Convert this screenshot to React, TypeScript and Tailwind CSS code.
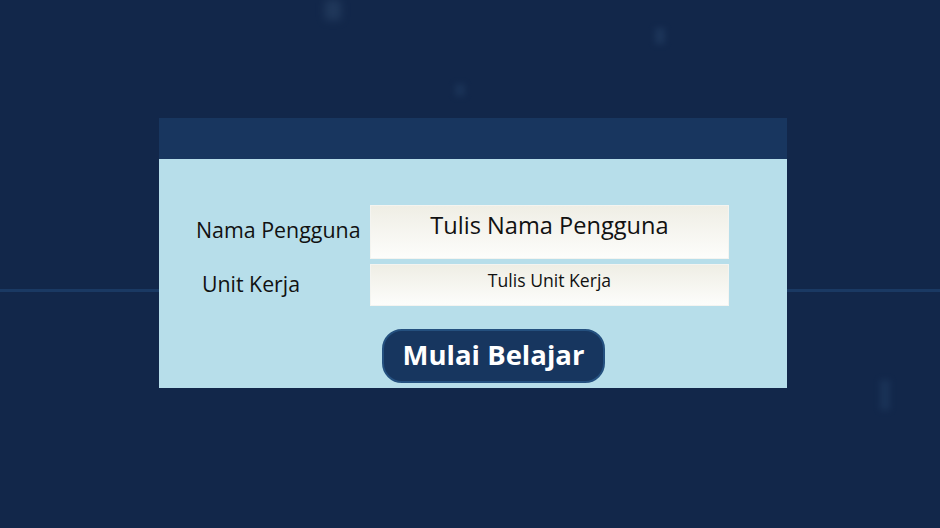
import React from "react";

export default function App() {
  return (
    <div
      className="relative w-[940px] h-[528px] overflow-hidden bg-[#12274a]"
      style={{ fontFamily: '"Open Sans", "Noto Sans", sans-serif' }}
    >
      {/* faint background streaks */}
      <div className="absolute left-0 right-0 top-[289px] h-[3px] bg-[#1a3963]" />
      <div className="absolute left-[325px] top-0 w-[16px] h-[20px] bg-[#2a4466] opacity-60 blur-[4px]" />
      <div className="absolute left-[655px] top-[28px] w-[10px] h-[16px] bg-[#233e63] opacity-60 blur-[3px]" />
      <div className="absolute left-[455px] top-[84px] w-[10px] h-[12px] bg-[#203b60] opacity-60 blur-[3px]" />
      <div className="absolute left-[880px] top-[380px] w-[10px] h-[30px] bg-[#1f3a5f] opacity-60 blur-[3px]" />

      <div className="relative ml-[159px] pt-[118px] w-[628px]">
        <div className="h-[41px] bg-[#18365f]" />
        <div className="h-[229px] bg-[#b7deea] pt-[46px]">
          <div className="flex items-center h-[54px]">
            <div className="w-[211px] pl-[37px] text-[21.4px] text-[#111] leading-none pb-[4px]">
              Nama Pengguna
            </div>
            <div className="w-[359px] h-[54px] bg-gradient-to-b from-[#efeee5] to-[#fdfdfb] border border-[#f4f4f0] flex justify-center pt-[3px]">
              <span className="text-[23.6px] leading-[32px] text-[#111]">Tulis Nama Pengguna</span>
            </div>
          </div>
          <div className="flex items-center h-[42px] mt-[5px]">
            <div className="w-[211px] pl-[43px] text-[21.3px] text-[#111] leading-none pb-[3px]">
              Unit Kerja
            </div>
            <div className="w-[359px] h-[42px] bg-gradient-to-b from-[#efeee5] to-[#fdfdfb] border border-[#f4f4f0] flex justify-center pt-[3px]">
              <span className="text-[17.6px] leading-[24px] text-[#111]">Tulis Unit Kerja</span>
            </div>
          </div>
          <div className="flex mt-[23px] pl-[223px]">
            <div className="w-[223px] h-[54px] rounded-[20px] bg-[#17365f] border-2 border-[#24507f] flex items-center justify-center">
              <span className="text-[27.5px] font-bold text-white leading-none pb-[2px]">Mulai Belajar</span>
            </div>
          </div>
        </div>
      </div>
    </div>
  );
}
